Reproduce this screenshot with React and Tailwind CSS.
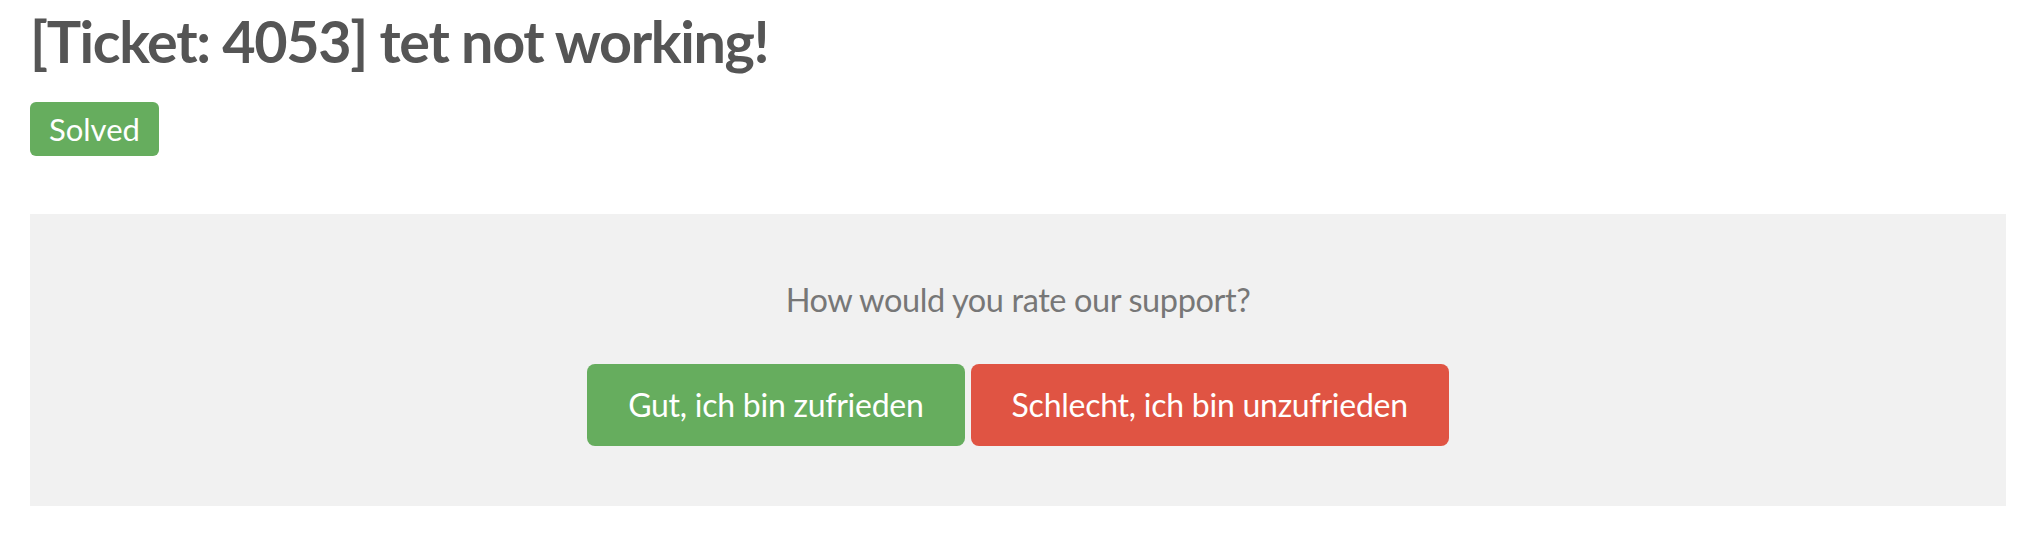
import React from 'react';

export default function App() {
  return (
    <div className="min-h-screen w-full bg-white px-[30px] pt-[6px] font-['Lato',sans-serif]">
      {/* ticket header */}
      <h1 className="text-[57.5px] leading-[70px] font-bold tracking-[-1.35px] text-[#555555]">
        [Ticket: 4053] tet not working!
      </h1>
      <div className="mt-[26px] flex">
        <span className="flex h-[54px] items-center rounded-[6px] bg-[#66ad5e] px-[19px] text-[31px] text-white">
          Solved
        </span>
      </div>

      {/* rating box */}
      <div className="mt-[58px] flex w-full flex-col items-center bg-[#f1f1f1] pt-[66px] pb-[60px]">
        <p className="text-[32.5px] leading-[39px] tracking-[-0.4px] text-[#777777]">How would you rate our support?</p>
        <div className="mt-[45px] flex gap-[6px]">
          <button className="h-[82px] rounded-[8px] bg-[#66ad5e] px-[41px] text-[32px] tracking-[-0.25px] text-white">
            Gut, ich bin zufrieden
          </button>
          <button className="h-[82px] rounded-[8px] bg-[#e05443] px-[41px] text-[32px] tracking-[-0.25px] text-white">
            Schlecht, ich bin unzufrieden
          </button>
        </div>
      </div>
    </div>
  );
}
